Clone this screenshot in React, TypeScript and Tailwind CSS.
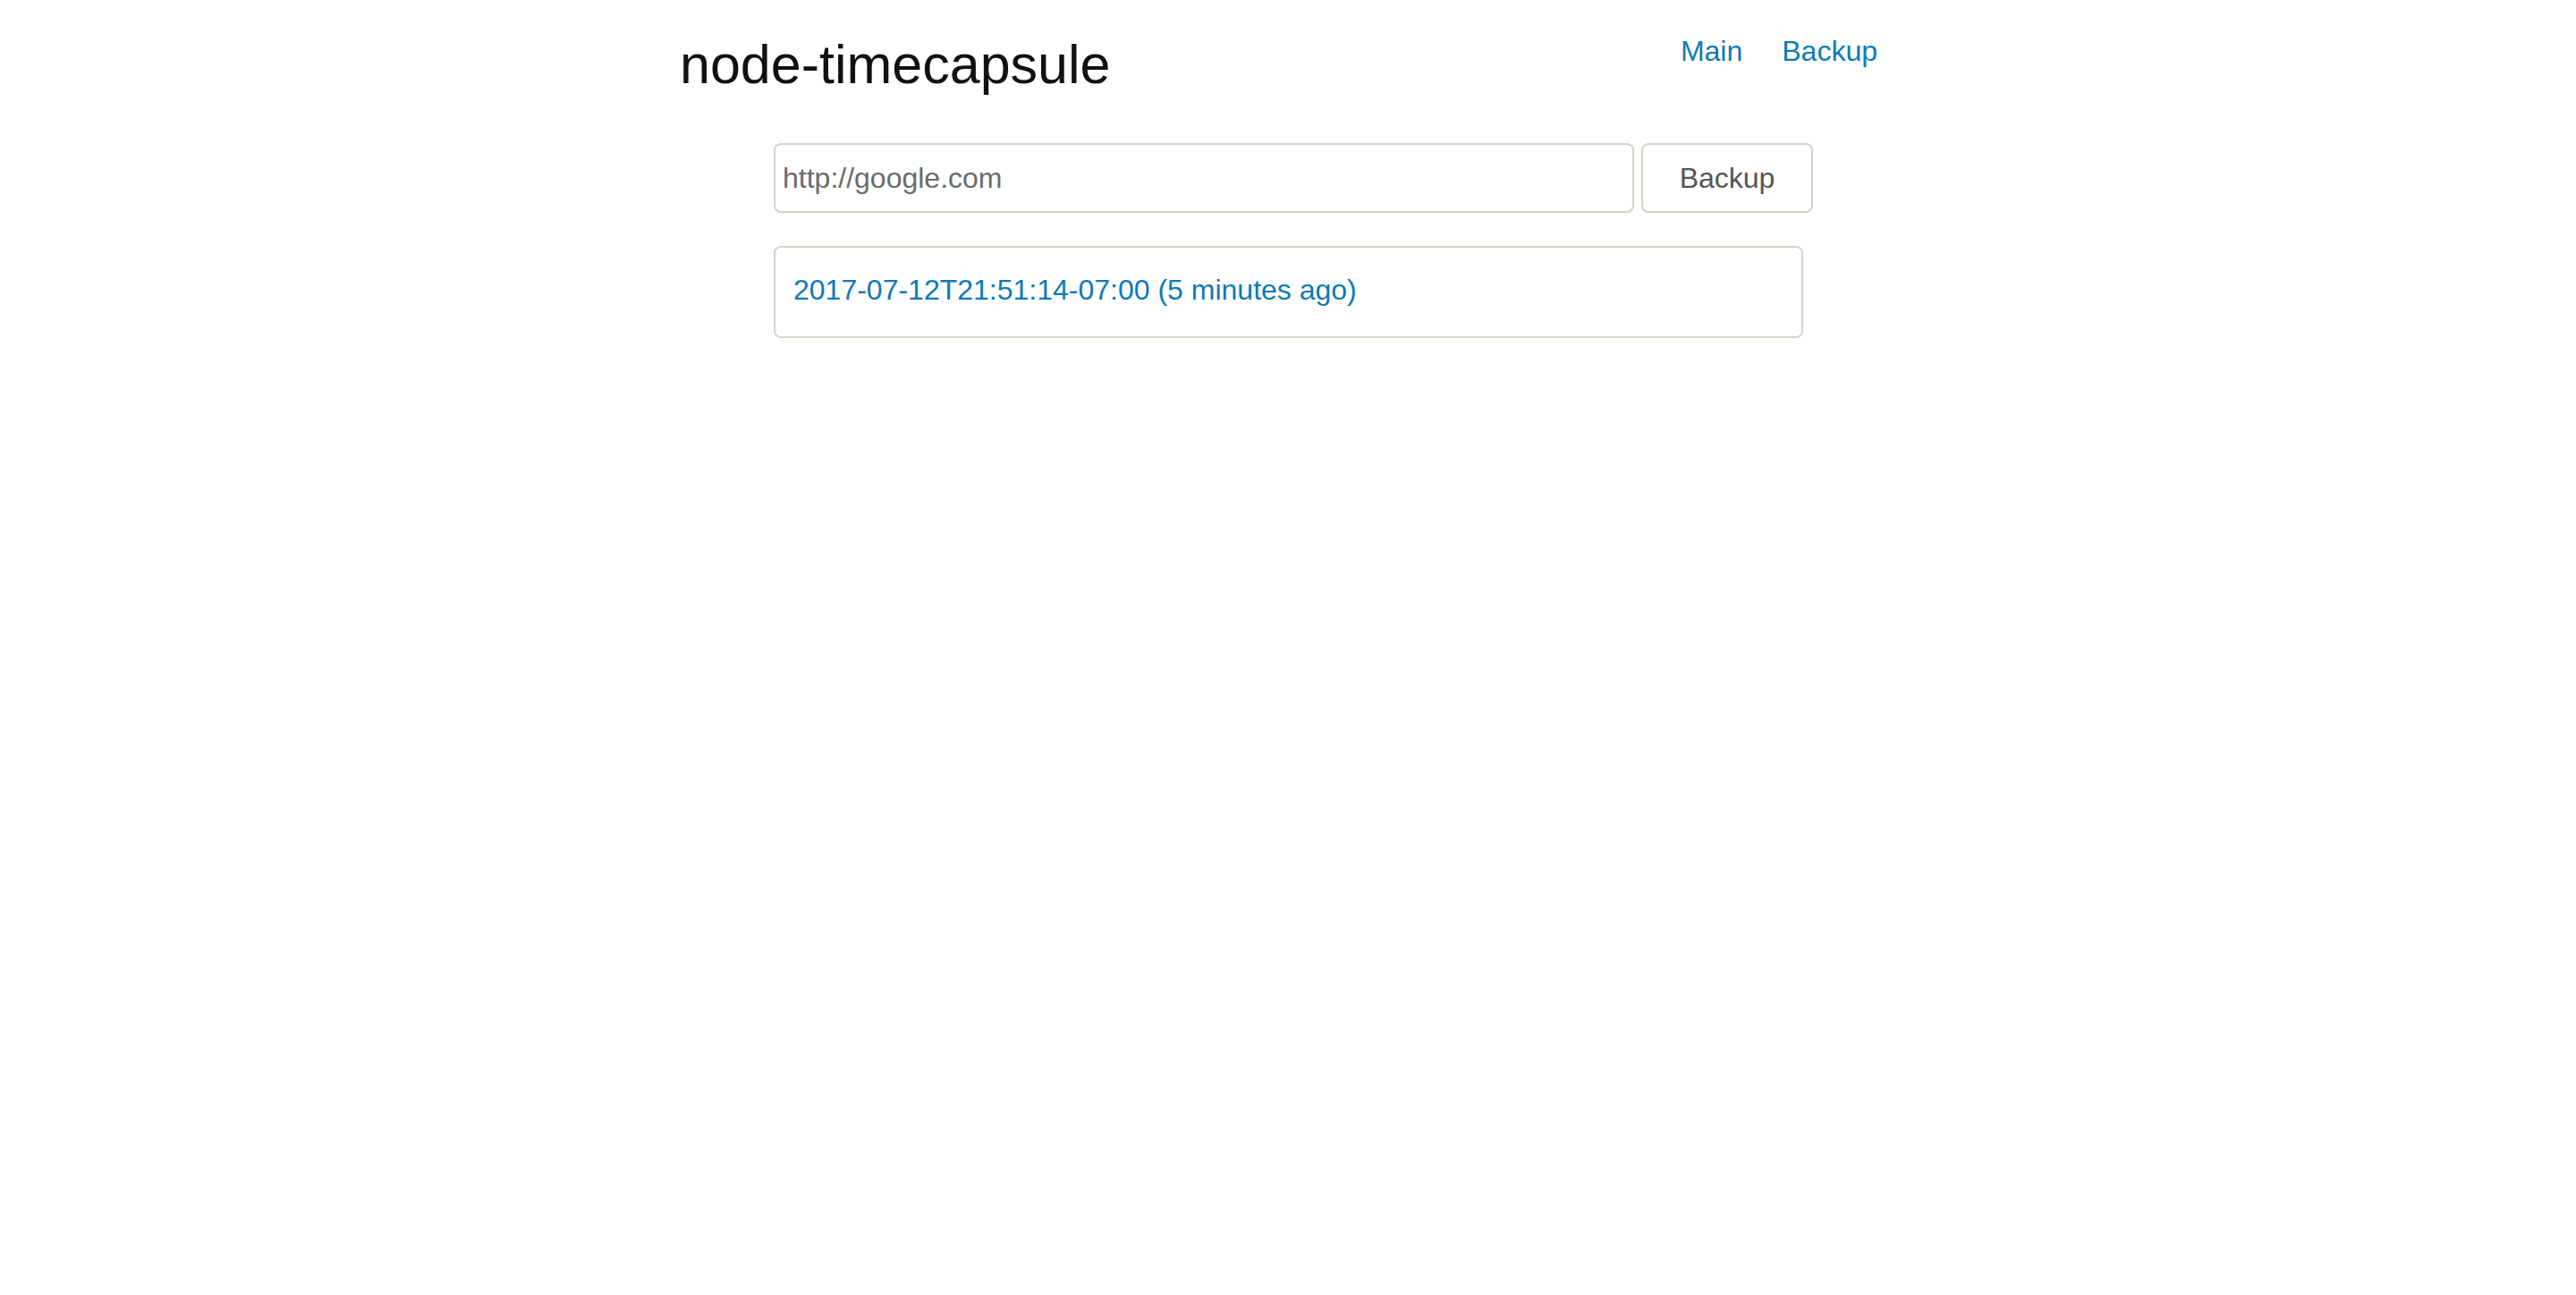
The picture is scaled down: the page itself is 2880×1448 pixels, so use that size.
import { useState } from 'react';

const backups = [
  { stamp: '2017-07-12T21:51:14-07:00', ago: '5 minutes ago' },
];

export default function App() {
  const [url, setUrl] = useState('http://google.com');

  return (
    <div className="min-h-screen bg-white font-['Liberation_Sans',Arial,sans-serif]">
      <div className="mx-auto w-[1360px]">
        {/* header */}
        <header className="flex items-start justify-between pt-[33px]">
          <h1 className="mt-[6px] text-[61px] leading-[66px] font-normal text-[#111111]">
            node-timecapsule
          </h1>
          <nav className="flex gap-[44px] pr-[21px] text-[32px] leading-[48px] text-[#0e7ab6]">
            <a href="#" className="hover:underline">Main</a>
            <a href="#" className="hover:underline">Backup</a>
          </nav>
        </header>

        {/* backup form + list */}
        <main className="ml-[105px] mt-[55px]">
          <form
            className="flex gap-[8px]"
            onSubmit={(e) => e.preventDefault()}
          >
            <input
              type="text"
              value={url}
              onChange={(e) => setUrl(e.target.value)}
              className="h-[78px] w-[962px] rounded-[8px] border-2 border-[#d3d3c7] bg-white px-[8px] text-[32px] text-[#6b6b6b] outline-none"
            />
            <button
              type="submit"
              className="h-[78px] w-[192px] rounded-[8px] border-2 border-[#d3d3c7] bg-white text-[32px] text-[#575454]"
            >
              Backup
            </button>
          </form>

          <div className="mt-[37px] w-[1151px] rounded-[8px] border-2 border-[#d3d3c7] pl-[20px] pt-[23px] pb-[28px]">
            {backups.map((b) => (
              <a
                key={b.stamp}
                href="#"
                className="block text-[32px] leading-[48px] text-[#0e7ab6]"
              >
                {b.stamp} ({b.ago})
              </a>
            ))}
          </div>
        </main>
      </div>
    </div>
  );
}
